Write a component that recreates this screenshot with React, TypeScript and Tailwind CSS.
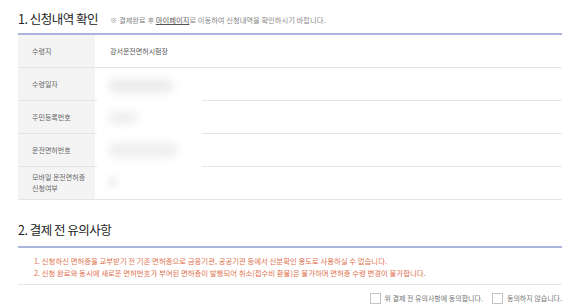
import React from 'react';

const rows = [
  { label: '수령지', value: '강서운전면허시험장' },
  { label: '수령일자' },
  { label: '주민등록번호' },
  { label: '운전면허번호' },
  { label: '모바일 운전면허증 신청여부' },
];

function Checkbox({ label }: { label: string }) {
  return (
    <label className="flex items-center gap-[4px]">
      <span className="w-[11px] h-[11px] border border-[#c4c4c4] bg-white" />
      <span>{label}</span>
    </label>
  );
}

export default function App() {
  return (
    <div className="w-[580px] h-[307px] bg-white px-[18px] text-[#555] overflow-hidden" style={{ fontFamily: '"Noto Sans CJK KR", "Noto Sans", sans-serif' }}>
      <div className="flex items-end h-[33px] pb-[8px] gap-[12px]">
        <h2 className="text-[12.5px] font-normal text-[#222] tracking-[-0.5px] leading-none">1. 신청내역 확인</h2>
        <p className="text-[7.3px] text-[#888] leading-none mb-[1px]">
          <span style={{ fontVariantEmoji: 'text' } as React.CSSProperties}>{'\u203B\uFE0E'}</span> 결제완료 후 <span className="text-[#555] underline">마이페이지</span>로 이동하여 신청내역을 확인하시기 바랍니다.
        </p>
      </div>
      <div className="relative border-t-2 border-[#a9b5da]">
        {rows.map((r) => (
          <div key={r.label} className="flex h-[33px] border-b border-[#e4e4e4] text-[7px]">
            <div className="w-[77px] bg-[#f4f4f4] flex items-center pl-[14px] pr-[6px] leading-[11px] text-[#666]">
              {r.label}
            </div>
            <div className="flex-1 flex items-center pl-[15px] text-[#555]">
              {r.value}
            </div>
          </div>
        ))}
        <div className="absolute left-[79px] top-[35px] w-[105px] h-[126px] bg-white">
          <div className="flex flex-col pl-[11px] pt-[9px] gap-[19px]">
            <div className="w-[66px] h-[14px] rounded-full bg-[#ececec] blur-[4px]" />
            <div className="w-[30px] h-[12px] rounded-full bg-[#eeeeee] blur-[4px]" />
            <div className="w-[70px] h-[14px] rounded-full bg-[#eeeeee] blur-[4px]" />
            <div className="w-[9px] h-[12px] rounded-full bg-[#efefef] blur-[3px]" />
          </div>
        </div>
      </div>
      <h2 className="mt-[24px] text-[12.5px] font-normal text-[#222] tracking-[-0.5px] leading-none pb-[9px] border-b-2 border-[#a9b5da]">
        2. 결제 전 유의사항
      </h2>
      <div className="pl-[16px] pt-[7px] pb-[5px] text-[7.4px] leading-[12px] text-[#e0714e] border-b border-[#e4e4e4]">
        <p>1. 신청하신 면허증을 교부받기 전 기존 면허증으로 금융기관, 공공기관 등에서 신분확인 용도로 사용하실 수 없습니다.</p>
        <p>2. 신청 완료와 동시에 새로운 면허번호가 부여된 면허증이 발행되어 취소(접수비 환불)은 불가하며 면허증 수령 변경이 불가합니다.</p>
      </div>
      <div className="flex justify-end gap-[9px] pt-[8px] text-[7px] text-[#777]">
        <Checkbox label="위 결제 전 유의사항에 동의합니다." />
        <Checkbox label="동의하지 않습니다." />
      </div>
    </div>
  );
}
